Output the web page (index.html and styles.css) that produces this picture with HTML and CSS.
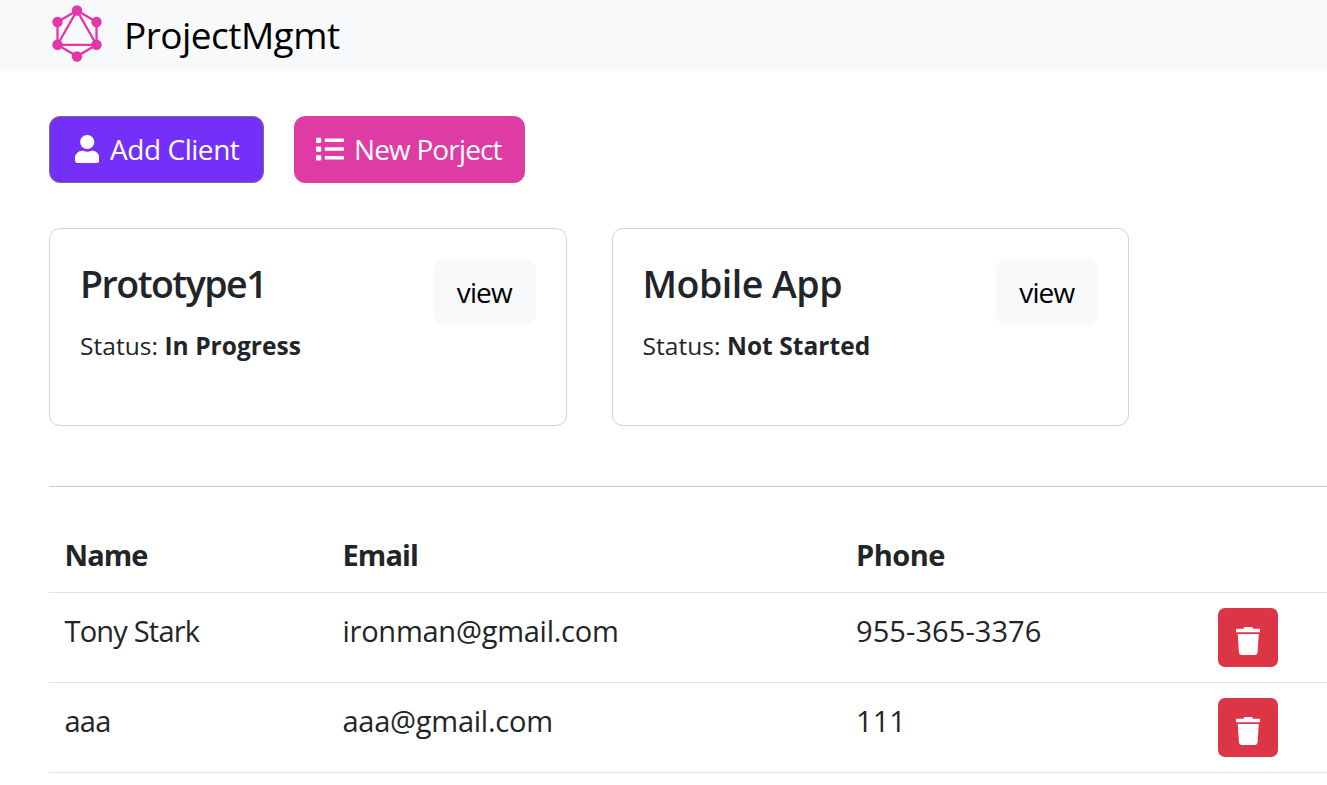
FILE: index.html
```html
<!DOCTYPE html>
<html lang="en">
<head>
<meta charset="utf-8">
<title>ProjectMgmt</title>
<link rel="stylesheet" href="styles.css">
</head>
<body>
<nav class="navbar">
  <svg class="logo" viewBox="0 0 54 60" aria-hidden="true">
    <path d="M27 7.500 46.500 19V41.800L27 53.300 7.500 41.800V19ZM27 7.500 46.500 41.800H7.500Z" fill="none" stroke="#e535ab" stroke-width="2.300"/>
    <g fill="#e535ab"><circle cx="27" cy="7.500" r="5.200"/><circle cx="46.500" cy="19" r="5.200"/><circle cx="46.500" cy="41.800" r="5.200"/><circle cx="27" cy="53.500" r="5.200"/><circle cx="7.500" cy="41.800" r="5.200"/><circle cx="7.500" cy="19" r="5.200"/></g>
  </svg>
  <span class="brand">ProjectMgmt</span>
</nav>
<main class="container">
  <div class="actions">
    <button class="btn btn-client"><svg class="icon-user" viewBox="0 0 448 512"><path d="M224 256c70.700 0 128-57.300 128-128S294.700 0 224 0 96 57.300 96 128s57.300 128 128 128zm89.600 32h-16.700c-22.200 10.200-46.900 16-72.900 16s-50.600-5.800-72.900-16h-16.700C60.200 288 0 348.200 0 422.400V464c0 26.500 21.500 48 48 48h352c26.500 0 48-21.500 48-48v-41.600c0-74.200-60.200-134.400-134.400-134.400z"/></svg><span class="label-client">Add Client</span></button>
    <button class="btn btn-project"><svg class="icon-list" viewBox="0 0 512 512"><path d="M80 368H16a16 16 0 0 0-16 16v64a16 16 0 0 0 16 16h64a16 16 0 0 0 16-16v-64a16 16 0 0 0-16-16zm0-320H16A16 16 0 0 0 0 64v64a16 16 0 0 0 16 16h64a16 16 0 0 0 16-16V64a16 16 0 0 0-16-16zm0 160H16a16 16 0 0 0-16 16v64a16 16 0 0 0 16 16h64a16 16 0 0 0 16-16v-64a16 16 0 0 0-16-16zm416 176H176a16 16 0 0 0-16 16v32a16 16 0 0 0 16 16h320a16 16 0 0 0 16-16v-32a16 16 0 0 0-16-16zm0-320H176a16 16 0 0 0-16 16v32a16 16 0 0 0 16 16h320a16 16 0 0 0 16-16V80a16 16 0 0 0-16-16zm0 160H176a16 16 0 0 0-16 16v32a16 16 0 0 0 16 16h320a16 16 0 0 0 16-16v-32a16 16 0 0 0-16-16z"/></svg><span class="label-project">New Porject</span></button>
  </div>
  <div class="cards">
    <section class="card">
      <div class="card-text"><h5 class="card-title">Prototype1</h5><p class="status">Status: <strong>In Progress</strong></p></div>
      <a class="view">view</a>
    </section>
    <section class="card">
      <div class="card-text"><h5 class="card-title title-app">Mobile App</h5><p class="status">Status: <strong>Not Started</strong></p></div>
      <a class="view">view</a>
    </section>
  </div>
  <hr class="divider">
  <div class="table">
    <div class="row head"><span>Name</span><span>Email</span><span class="head-phone">Phone</span></div>
    <div class="row"><span class="name">Tony Stark</span><span class="email">ironman@gmail.com</span><span class="phone">955-365-3376</span>
      <button class="trash"><svg viewBox="0 0 448 512"><path d="M432 32H312l-9.400-18.700A24 24 0 0 0 281.100 0H166.800a23.720 23.720 0 0 0-21.400 13.300L136 32H16A16 16 0 0 0 0 48v32a16 16 0 0 0 16 16h416a16 16 0 0 0 16-16V48a16 16 0 0 0-16-16zM53.200 467a48 48 0 0 0 47.900 45h245.800a48 48 0 0 0 47.900-45L416 128H32z"/></svg></button></div>
    <div class="row"><span class="name">aaa</span><span class="email">aaa@gmail.com</span><span class="phone">111</span>
      <button class="trash"><svg viewBox="0 0 448 512"><path d="M432 32H312l-9.400-18.700A24 24 0 0 0 281.100 0H166.800a23.720 23.720 0 0 0-21.400 13.300L136 32H16A16 16 0 0 0 0 48v32a16 16 0 0 0 16 16h416a16 16 0 0 0 16-16V48a16 16 0 0 0-16-16zM53.200 467a48 48 0 0 0 47.900 45h245.800a48 48 0 0 0 47.900-45L416 128H32z"/></svg></button></div>
  </div>
</main>
</body>
</html>
```
FILE: styles.css
```css
* { box-sizing: border-box; }
body {
  margin: 0;
  background: #fff;
  color: #212529;
  font-family: "Segoe UI", "Open Sans", "Noto Sans", sans-serif;
  font-size: 29px;
  line-height: 45px;
  overflow: hidden;
}
.navbar {
  display: flex;
  height: 71px;
  padding: 3px 0 0 50px;
  background: #f8f9fa;
}
.logo { width: 54px; height: 60px; }
.brand { margin-left: 20px; font-size: 37px; line-height: 63px; letter-spacing: -0.540px; color: #000; }
.container { padding: 45px 0 0 49px; }
.actions { display: flex; gap: 30px; }
.btn {
  display: flex;
  align-items: center;
  height: 67px;
  border: 1px solid transparent;
  border-radius: 11px;
  color: #fff;
  font-family: inherit;
  font-size: 28px;
  line-height: 42px;
  white-space: nowrap;
}
.btn svg, .trash svg { flex: none; fill: #fff; }
.btn-client { width: 215px; padding: 0 0 2px 24.500px; background: #7430f9; border-color: #6c757d; }
.btn-project { width: 231px; padding: 0 0 2px 21px; background: #df3ba4; border-color: #df3ba4; }
.label-client { letter-spacing: -0.450px; }
.label-project { letter-spacing: -0.850px; }
.icon-user { width: 24.500px; height: 28px; margin-right: 11px; }
.icon-list { width: 28px; height: 28px; margin-right: 10px; }
.cards { display: flex; gap: 45px; margin-top: 45px; }
.card {
  display: flex;
  justify-content: space-between;
  align-items: flex-start;
  width: 517.500px;
  height: 198px;
  padding: 30px;
  border: 1px solid #d2d3d4;
  border-radius: 11px;
}
.card-title { margin: 0; font-size: 37.500px; font-weight: 600; line-height: 49px; letter-spacing: -1.500px; }
.title-app { letter-spacing: -0.500px; }
.status { margin: 15px 0 0; font-size: 24.500px; line-height: 46px; letter-spacing: 0.050px; white-space: nowrap; }
.view {
  width: 102.500px;
  height: 66px;
  border-radius: 11px;
  background: #f8f9fa;
  color: #000;
  font-size: 28px;
  line-height: 67px;
  letter-spacing: -0.900px;
  text-align: center;
}
.divider { height: 1px; margin: 60px 0 32px; border: 0; background: #c8c9ca; }
.row {
  display: grid;
  grid-template-columns: 278px 513.500px 362px 1fr;
  height: 90px;
  padding: 15px 0 0 15.500px;
  border-bottom: 1px solid #dee2e6;
}
.head { height: 74px; padding-top: 13px; font-weight: 700; letter-spacing: -0.900px; }
.head-phone { letter-spacing: -0.500px; }
.name { letter-spacing: -0.800px; }
.email { letter-spacing: -0.250px; }
.phone { letter-spacing: 0.080px; }
.trash {
  display: flex;
  justify-content: center;
  width: 60px;
  height: 59px;
  padding: 19px 0 0;
  border: 0;
  border-radius: 7px;
  background: #dc3545;
}
.trash svg { width: 24.500px; height: 28px; }
```
